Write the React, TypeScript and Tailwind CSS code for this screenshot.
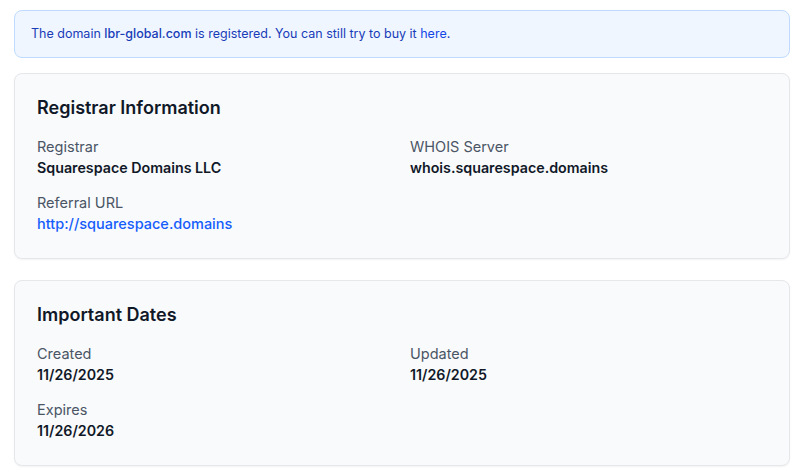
export default function App() {
  // --- DATA ---
  const registrar = [
    { label: 'Registrar', value: 'Squarespace Domains LLC' },
    { label: 'WHOIS Server', value: 'whois.squarespace.domains' },
    { label: 'Referral URL', value: 'http://squarespace.domains', link: true },
  ];
  const dates = [
    { label: 'Created', value: '11/26/2025' },
    { label: 'Updated', value: '11/26/2025' },
    { label: 'Expires', value: '11/26/2026' },
  ];

  const Card = ({ title, items }: { title: string; items: { label: string; value: string; link?: boolean }[] }) => (
    <section className="rounded-lg border border-gray-200 bg-gray-50 px-[22px] py-6 shadow-[0_1px_2px_rgba(0,0,0,0.05)]">
      <h2 className="mb-[18px] text-lg font-semibold leading-5 text-gray-900">{title}</h2>
      <div className="grid grid-cols-2 gap-x-4 gap-y-[14px]">
        {items.map((item) => (
          <div key={item.label}>
            <div className="text-[14.5px] leading-[21px] text-gray-600">{item.label}</div>
            {item.link ? (
              <a href="#" className="block text-[14.5px] font-medium leading-[21px] text-blue-600">{item.value}</a>
            ) : (
              <div className="text-[14.25px] font-semibold leading-[21px] text-gray-900">{item.value}</div>
            )}
          </div>
        ))}
      </div>
    </section>
  );

  return (
    <main className="min-h-screen bg-white pl-[14px] pr-[10px] pt-[10px] font-['Inter',sans-serif] antialiased">
      <div className="flex h-12 items-center rounded-lg border border-blue-200 bg-blue-50 px-4 pt-px text-[12.5px] text-blue-800">
        <p>
          The domain <span className="font-medium">lbr-global.com</span> is registered. You can still try to buy it{' '}
          <a href="#" className="text-blue-700">here</a>.
        </p>
      </div>
      <div className="mt-[15px]">
        <Card title="Registrar Information" items={registrar} />
      </div>
      <div className="mt-[21px]">
        <Card title="Important Dates" items={dates} />
      </div>
    </main>
  );
}
